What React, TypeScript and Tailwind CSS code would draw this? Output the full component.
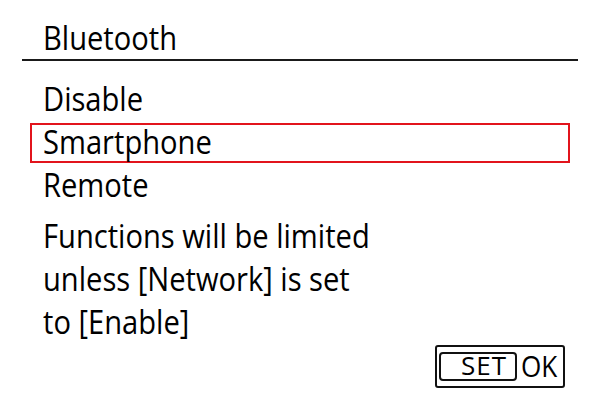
import React from "react";

const T = ({ children }: { children: React.ReactNode }) => (
  <span className="inline-block origin-left scale-x-[0.91] whitespace-nowrap">{children}</span>
);

export default function App() {
  return (
    <div
      className="w-[600px] h-[400px] bg-white text-black overflow-hidden flex flex-col"
      style={{ fontFamily: '"Open Sans", "Noto Sans", sans-serif' }}
    >
      <div className="mt-[16px] h-[43px] leading-[43px] text-[32px] pl-[43px]">
        <T>Bluetooth</T>
      </div>
      <div className="mx-[22px] h-[2px] bg-[#1a1a1a]" />
      <div className="mt-[16px] flex flex-col text-[32px]">
        <div className="h-[43px] leading-[43px] pl-[43px]">
          <T>Disable</T>
        </div>
        <div className="relative h-[43px] leading-[43px] pl-[43px]">
          <div className="absolute left-[30px] right-[30px] top-[3px] bottom-0 border-2 border-[#e2141c]" />
          <T>Smartphone</T>
        </div>
        <div className="h-[43px] leading-[43px] pl-[43px]">
          <T>Remote</T>
        </div>
      </div>
      <div className="mt-[8px] flex flex-col text-[32px] pl-[43px]">
        <div className="h-[43px] leading-[43px]">
          <T>Functions will be limited</T>
        </div>
        <div className="h-[43px] leading-[43px]">
          <T>unless [Network] is set</T>
        </div>
        <div className="h-[43px] leading-[43px]">
          <T>to [Enable]</T>
        </div>
      </div>
      <div className="mt-[2px] flex justify-end pr-[35px]">
        <div className="w-[130px] h-[43px] border-2 border-[#111] rounded-[3px] flex items-start pl-[2px] pt-[5px]">
          <div className="w-[78px] h-[29px] border-2 border-[#111] rounded-[4px] flex items-center justify-end pr-[8px] pb-[4px] text-[26px] leading-none tracking-[1px]">
            SET
          </div>
          <div className="ml-[4px] h-[29px] flex items-center pb-[3px] text-[29px] leading-none">
            <span className="inline-block origin-left scale-x-[0.9]">OK</span>
          </div>
        </div>
      </div>
    </div>
  );
}
